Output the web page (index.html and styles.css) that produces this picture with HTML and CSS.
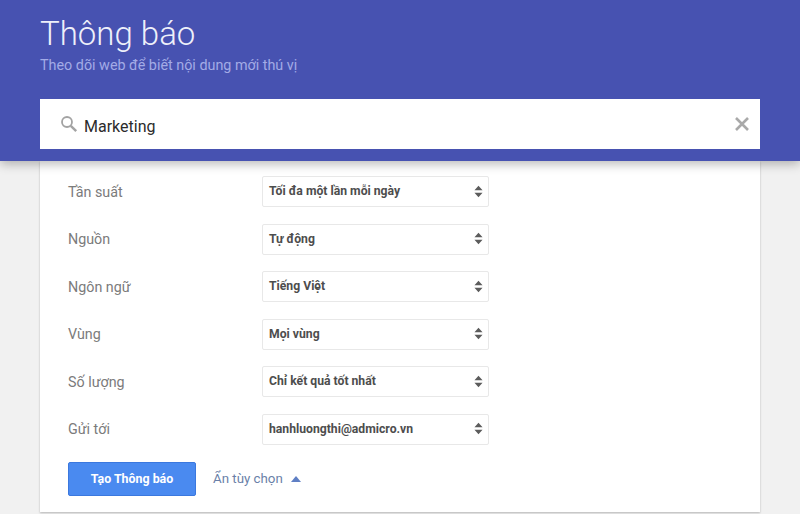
FILE: index.html
```html
<!DOCTYPE html>
<html lang="vi">
<head>
    <meta charset="UTF-8">
    <meta name="viewport" content="width=device-width, initial-scale=1.0">
    <title>Thông báo</title>
    <link rel="stylesheet" href="styles.css">
</head>
<body>
    <header class="header">
        <h1>Thông báo</h1>
        <p class="subtitle">Theo dõi web để biết nội dung mới thú vị</p>
        <div class="search">
            <svg class="search-icon" viewBox="0 0 18 18" width="18" height="18">
                <circle cx="7" cy="7" r="5" fill="none" stroke="#a3a3a3" stroke-width="1.8"/>
                <path d="M10.8 10.8 L16.2 16.2" stroke="#a3a3a3" stroke-width="2.4"/>
            </svg>
            <span class="search-text">Marketing</span>
            <svg class="clear-icon" viewBox="0 0 14 14" width="14" height="14">
                <path d="M1 1 L13 13 M13 1 L1 13" stroke="#a9a9a9" stroke-width="2.6"/>
            </svg>
        </div>
    </header>

    <main class="card">
        <div class="row">
            <span class="label">Tần suất</span>
            <div class="select">
                <span>Tối đa một lần mỗi ngày</span>
                <svg class="arrows" viewBox="0 0 10 14" width="9" height="13"><path d="M5 0.5 L9.5 5.5 H0.5 Z M0.5 8.5 H9.5 L5 13.5 Z" fill="#5c5c5c"/></svg>
            </div>
        </div>
        <div class="row">
            <span class="label">Nguồn</span>
            <div class="select">
                <span>Tự động</span>
                <svg class="arrows" viewBox="0 0 10 14" width="9" height="13"><path d="M5 0.5 L9.5 5.5 H0.5 Z M0.5 8.5 H9.5 L5 13.5 Z" fill="#5c5c5c"/></svg>
            </div>
        </div>
        <div class="row">
            <span class="label">Ngôn ngữ</span>
            <div class="select">
                <span>Tiếng Việt</span>
                <svg class="arrows" viewBox="0 0 10 14" width="9" height="13"><path d="M5 0.5 L9.5 5.5 H0.5 Z M0.5 8.5 H9.5 L5 13.5 Z" fill="#5c5c5c"/></svg>
            </div>
        </div>
        <div class="row">
            <span class="label">Vùng</span>
            <div class="select">
                <span>Mọi vùng</span>
                <svg class="arrows" viewBox="0 0 10 14" width="9" height="13"><path d="M5 0.5 L9.5 5.5 H0.5 Z M0.5 8.5 H9.5 L5 13.5 Z" fill="#5c5c5c"/></svg>
            </div>
        </div>
        <div class="row">
            <span class="label">Số lượng</span>
            <div class="select">
                <span>Chỉ kết quả tốt nhất</span>
                <svg class="arrows" viewBox="0 0 10 14" width="9" height="13"><path d="M5 0.5 L9.5 5.5 H0.5 Z M0.5 8.5 H9.5 L5 13.5 Z" fill="#5c5c5c"/></svg>
            </div>
        </div>
        <div class="row">
            <span class="label">Gửi tới</span>
            <div class="select">
                <span>hanhluongthi@admicro.vn</span>
                <svg class="arrows" viewBox="0 0 10 14" width="9" height="13"><path d="M5 0.5 L9.5 5.5 H0.5 Z M0.5 8.5 H9.5 L5 13.5 Z" fill="#5c5c5c"/></svg>
            </div>
        </div>
        <div class="actions">
            <button class="create-button">Tạo Thông báo</button>
            <span class="toggle">Ẩn tùy chọn</span>
            <svg class="toggle-arrow" viewBox="0 0 10 6" width="10" height="6"><path d="M5 0 L10 6 H0 Z" fill="#5f7fc4"/></svg>
        </div>
    </main>
</body>
</html>
```

FILE: styles.css
```css
/* General body styling */
body {
    margin: 0;
    background: #f1f1f1;
    font-family: Roboto, "Liberation Sans", sans-serif;
    height: 514px;
    overflow: hidden;
}

/* Header styling */
.header {
    position: relative;
    z-index: 1;
    box-sizing: border-box;
    height: 161px;
    padding: 14px 40px 0;
    background: #4752b1;
    box-shadow: 0 3px 10px rgba(0, 0, 0, 0.28);
}

h1 {
    margin: 0;
    color: #eef0fa;
    font-size: 33px;
    font-weight: 300;
    line-height: 39px;
}

.subtitle {
    margin: 4px 0 0;
    color: #a3abe6;
    font-size: 14.35px;
    line-height: 18px;
}

/* Search box */
.search {
    display: flex;
    align-items: center;
    box-sizing: border-box;
    height: 50px;
    margin-top: 24px;
    padding: 0 11px 0 20px;
    background: #fff;
}

.search-icon {
    margin-right: 6px;
}

.search-text {
    flex: 1;
    padding-top: 4px;
    color: #2b2b2b;
    font-size: 16px;
}

/* Card styling */
.card {
    box-sizing: border-box;
    width: 720px;
    height: 351px;
    margin: 0 auto;
    padding: 15px 28px 0;
    background: #fff;
    box-shadow: 0 1px 2px rgba(0, 0, 0, 0.25);
}

.row {
    display: flex;
    align-items: center;
    height: 31px;
    margin-bottom: 16.6px;
}

.label {
    width: 194px;
    color: #7b7b7b;
    font-size: 14.3px;
}

.select {
    display: flex;
    align-items: center;
    justify-content: space-between;
    box-sizing: border-box;
    width: 227px;
    height: 31px;
    padding: 0 5px 1px 6px;
    border: 1px solid #e8e8e8;
    border-radius: 2px;
    color: #4d4d4d;
    font-size: 12.2px;
    font-weight: 700;
}

/* Bottom actions */
.actions {
    display: flex;
    align-items: center;
    margin-top: 1px;
}

.create-button {
    width: 128px;
    height: 34px;
    border: 1px solid #3b78de;
    border-radius: 2px;
    background: #4a8af0;
    color: #fff;
    font-family: inherit;
    font-size: 12.4px;
    font-weight: 700;
}

.toggle {
    margin-left: 17px;
    color: #6a7fa8;
    font-size: 13.3px;
}

.toggle-arrow {
    margin-left: 8px;
}
```
